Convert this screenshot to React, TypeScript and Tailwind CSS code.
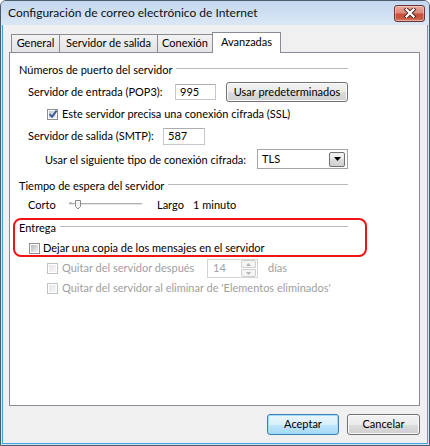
import React from "react";

const F = "font-['Lato',sans-serif]";

function Checkbox({ checked, disabled }: { checked?: boolean; disabled?: boolean }) {
  return (
    <span
      className={`relative flex h-[11px] w-[11px] shrink-0 border bg-white p-px ${
        disabled ? "border-[#c2c2c2]" : "border-[#8e8f8f]"
      }`}
    >
      <span
        className={`h-full w-full ${
          disabled
            ? "bg-[linear-gradient(135deg,#e6e6e6,#f7f7f7)]"
            : checked
            ? "bg-[linear-gradient(135deg,#b8c4d4,#eef2f7)]"
            : "bg-[linear-gradient(135deg,#b4b8bd,#f4f4f4)]"
        }`}
      />
      {checked && (
        <svg className="absolute left-[0px] top-[-1px]" width="10" height="10" viewBox="0 0 10 10">
          <path d="M1.5 5.2 L4 7.8 L8.6 1.6" fill="none" stroke="#3a5591" strokeWidth="1.9" strokeLinejoin="miter" />
        </svg>
      )}
    </span>
  );
}

function GroupHeader({ title }: { title: string }) {
  return (
    <div className="flex h-[14px] items-center">
      <span className="whitespace-nowrap leading-none">{title}</span>
      <span className="ml-[4px] mt-[-1px] h-px flex-1 bg-[#b9b9b9]" />
    </div>
  );
}

function TextBox({ value, w, h, disabled }: { value: string; w: string; h: string; disabled?: boolean }) {
  return (
    <div
      className={`${w} ${h} flex items-center border bg-white pl-[4px] ${
        disabled ? "border-[#d0d0d0] text-[#a0a0a0]" : "border-[#c4c8ce] border-t-[#abadb3]"
      }`}
    >
      {value}
    </div>
  );
}

export default function App() {
  return (
    <div
      className={`${F} flex h-[446px] w-[430px] flex-col overflow-hidden rounded-t-[6px] border border-[#4d5a6a] bg-[#d6e4f4] text-[11px] text-black`}
    >
      {/* Title bar */}
      <div className="flex h-[24px] shrink-0 items-center justify-between bg-[linear-gradient(#c3d7ef,#dbe7f5)] pl-[7px] pr-[4px]">
        <span className="text-[12px] leading-none text-[#111]">Configuración de correo electrónico de Internet</span>
        <div className="flex h-[17px] w-[31px] items-center justify-center rounded-[3px] border border-[#6b3631] bg-[linear-gradient(#e7aa9c_0%,#d98a7a_45%,#c7503a_55%,#c85a44_85%,#e08e7c_100%)] shadow-[inset_0_0_0_1px_rgba(255,255,255,0.35)]">
          <svg width="14" height="10" viewBox="0 0 14 10">
            <path d="M3.5 1.5 L10.5 8.5 M10.5 1.5 L3.5 8.5" stroke="#4a2624" strokeWidth="4" strokeLinecap="square" />
            <path d="M3.5 1.5 L10.5 8.5 M10.5 1.5 L3.5 8.5" stroke="#ffffff" strokeWidth="2.2" strokeLinecap="square" />
          </svg>
        </div>
      </div>

      {/* Body frame */}
      <div className="flex flex-1 flex-col px-px pb-px">
        <div className="flex flex-1 flex-col border-x border-b border-[#3aa8dd] bg-[#f0f0f0] pt-[7px]">
          {/* Tabs */}
          <div className="ml-[8px] flex h-[20px] items-end">
            <div className="flex h-[18px] w-[48px] items-center justify-center border-l border-t border-[#898c95] bg-[linear-gradient(#f3f3f3,#e3e3e3)]">
              General
            </div>
            <div className="flex h-[18px] w-[98px] items-center justify-center border-l border-t border-[#898c95] bg-[linear-gradient(#f3f3f3,#e3e3e3)]">
              Servidor de salida
            </div>
            <div className="flex h-[18px] w-[55px] items-center justify-center border-l border-t border-[#898c95] bg-[linear-gradient(#f3f3f3,#e3e3e3)]">
              Conexión
            </div>
            <div className="relative z-10 mb-[-1px] flex h-[21px] w-[69px] items-center justify-center border-x border-t border-[#898c95] bg-white pb-[1px]">
              Avanzadas
            </div>
          </div>

          {/* Panel */}
          <div className="ml-[6px] h-[354px] w-[411px] border border-[#898c95] bg-white pl-[9px] pt-[8px]">
            <div className="flex w-[329px] flex-col">
              <div className="flex h-[16px] items-center">
                <div className="w-full">
                  <GroupHeader title="Números de puerto del servidor" />
                </div>
              </div>

              <div className="mt-[5px] flex h-[20px] items-center pl-[9px]">
                <span className="w-[147px]">Servidor de entrada (POP3):</span>
                <TextBox value="995" w="w-[41px]" h="h-[16px]" />
                <button className="ml-[10px] flex h-[20px] w-[122px] items-center justify-center rounded-[3px] border border-[#707070] bg-[linear-gradient(#f2f2f2_0%,#ebebeb_50%,#dddddd_50%,#cfcfcf_100%)] text-[11px] shadow-[inset_0_0_0_1px_#fbfbfb]">
                  Usar predeterminados
                </button>
              </div>

              <div className="mt-[5px] flex h-[14px] items-center pl-[28px]">
                <Checkbox checked />
                <span className="ml-[4px]">Este servidor precisa una conexión cifrada (SSL)</span>
              </div>

              <div className="mt-[7px] flex h-[17px] items-center pl-[9px]">
                <span className="w-[135px]">Servidor de salida (SMTP):</span>
                <TextBox value="587" w="w-[42px]" h="h-[17px]" />
              </div>

              <div className="mt-[4px] flex h-[20px] items-center pl-[26px]">
                <span className="w-[212px] pt-[2px]">Usar el siguiente tipo de conexión cifrada:</span>
                <div className="flex h-[20px] w-[91px] items-center justify-between border border-[#a5a5a5] bg-white pl-[4px] pr-[2px]">
                  <span>TLS</span>
                  <div className="flex h-[15px] w-[16px] items-center justify-center rounded-[2px] border border-[#707070] bg-[linear-gradient(#f2f2f2_0%,#ebebeb_50%,#dddddd_50%,#cfcfcf_100%)]">
                    <svg width="7" height="4" viewBox="0 0 7 4">
                      <path d="M0 0 H7 L3.5 4 Z" fill="#000" />
                    </svg>
                  </div>
                </div>
              </div>

              <div className="mt-[8px] flex h-[16px] items-center">
                <div className="w-full">
                  <GroupHeader title="Tiempo de espera del servidor" />
                </div>
              </div>

              <div className="mt-[5px] flex h-[14px] items-center pl-[9px]">
                <span className="w-[41px]">Corto</span>
                <svg width="73" height="12" viewBox="0 0 73 12" className="shrink-0">
                  <rect x="0" y="4" width="73" height="1" fill="#b0b0b0" />
                  <rect x="0" y="5" width="73" height="1" fill="#e6e6e6" />
                  <rect x="0" y="3" width="3" height="1" fill="#c8c8c8" />
                  <path d="M6.5 1.5 H11.5 V7.5 L9 10 L6.5 7.5 Z" fill="#f4f4f4" stroke="#8a8a8a" />
                </svg>
                <span className="ml-[15px] w-[36px]">Largo</span>
                <span>1 minuto</span>
              </div>

              {/* Highlighted group */}
              <div className="ml-[-6px] mt-[6px] flex h-[39px] w-[354px] flex-col rounded-[8px] border-2 border-[#f01414] pl-[4px]">
                <div className="w-[329px]">
                  <GroupHeader title="Entrega" />
                </div>
                <div className="mt-[7px] flex h-[14px] items-center pl-[10px]">
                  <Checkbox />
                  <span className="ml-[3px]">Dejar una copia de los mensajes en el servidor</span>
                </div>
              </div>

              <div className="mt-[2px] flex h-[19px] items-center pl-[28px] text-[#a0a0a0]">
                <Checkbox disabled />
                <span className="ml-[4px] w-[145px]">Quitar del servidor después</span>
                <div className="flex h-[19px] w-[51px] items-center justify-between border border-[#d3d3d3] bg-white pl-[5px] pr-px">
                  <span>14</span>
                  <div className="flex h-[17px] w-[15px] flex-col">
                    <div className="flex h-[8px] items-center justify-center rounded-t-[2px] border border-[#d0d0d0] bg-[#f4f4f4]">
                      <svg width="5" height="3" viewBox="0 0 5 3">
                        <path d="M0 3 H5 L2.5 0 Z" fill="#b5b5b5" />
                      </svg>
                    </div>
                    <div className="mt-px flex h-[8px] items-center justify-center rounded-b-[2px] border border-[#d0d0d0] bg-[#f4f4f4]">
                      <svg width="5" height="3" viewBox="0 0 5 3">
                        <path d="M0 0 H5 L2.5 3 Z" fill="#b5b5b5" />
                      </svg>
                    </div>
                  </div>
                </div>
                <span className="ml-[10px]">días</span>
              </div>

              <div className="mt-[3px] flex h-[14px] items-center pl-[28px] text-[#a0a0a0]">
                <Checkbox disabled />
                <span className="ml-[4px]">Quitar del servidor al eliminar de 'Elementos eliminados'</span>
              </div>
            </div>
          </div>

          {/* Buttons */}
          <div className="mt-[8px] flex justify-end gap-[8px] pr-[7px]">
            <button className="flex h-[21px] w-[72px] items-center justify-center rounded-[3px] border border-[#3c7fb1] bg-[linear-gradient(#eaf6fd_0%,#d9f0fc_50%,#bee6fd_50%,#a7d9f5_100%)] text-[11px] shadow-[inset_0_0_0_1px_#9fdcf8]">
              Aceptar
            </button>
            <button className="flex h-[21px] w-[73px] items-center justify-center rounded-[3px] border border-[#707070] bg-[linear-gradient(#f2f2f2_0%,#ebebeb_50%,#dddddd_50%,#cfcfcf_100%)] text-[11px] shadow-[inset_0_0_0_1px_#fbfbfb]">
              Cancelar
            </button>
          </div>
        </div>
      </div>
    </div>
  );
}
